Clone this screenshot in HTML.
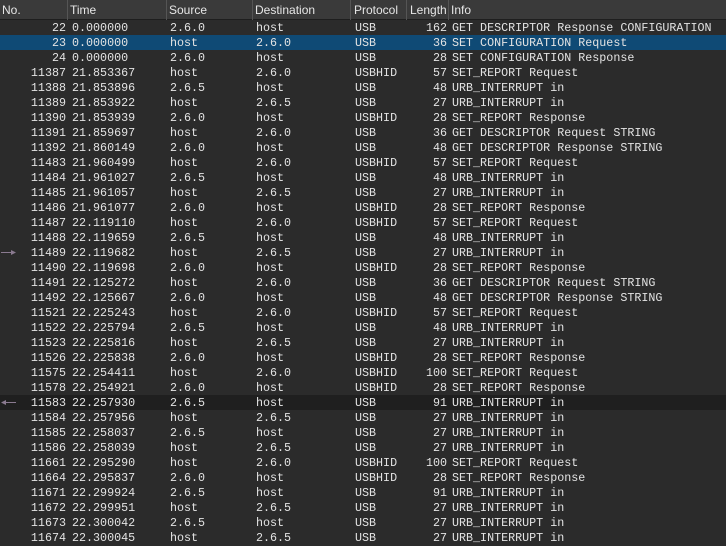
<!DOCTYPE html>
<html><head><meta charset="utf-8"><style>
*{margin:0;padding:0;box-sizing:border-box}
body{width:726px;height:545px;overflow:hidden;background:#2b2b2b;color:#e3e3e3;font-family:"Liberation Mono",monospace;font-size:11.7px}
.hd{position:absolute;left:0;top:0;width:726px;height:20px;background:#3a3a3a;border-bottom:1px solid #1e1e1e;font-family:"Liberation Sans",sans-serif;font-size:12px;color:#e6e6e6}
.hd span{position:absolute;top:3px}
.hd i{position:absolute;top:0;width:1px;height:20px;background:#555}
.r{position:absolute;left:0;width:726px;height:15px;line-height:15px;white-space:pre}
.r span{position:absolute;top:1px}
.n{right:660px;text-align:right}
.t{left:72px}.s{left:170px}.d{left:256px}.p{left:355px}
.l{right:279px;text-align:right}.f{left:452px}
.sel{background:#0f4a75}
.dk{background:#1f1f1f}
.ar{position:absolute;top:7px;height:1px;background:#8a7a90}
</style></head><body>
<div class="hd">
<span style="left:2px">No.</span><i style="left:67px"></i>
<span style="left:70px">Time</span><i style="left:166px"></i>
<span style="left:169px">Source</span><i style="left:252px"></i>
<span style="left:255px">Destination</span><i style="left:350px"></i>
<span style="left:354px">Protocol</span><i style="left:406px"></i>
<span style="left:410px">Length</span><i style="left:448px"></i>
<span style="left:451px">Info</span>
</div>
<div class="r" style="top:20px"><span class="n">22</span><span class="t">0.000000</span><span class="s">2.6.0</span><span class="d">host</span><span class="p">USB</span><span class="l">162</span><span class="f">GET DESCRIPTOR Response CONFIGURATION</span></div>
<div class="r sel" style="top:35px"><span class="n">23</span><span class="t">0.000000</span><span class="s">host</span><span class="d">2.6.0</span><span class="p">USB</span><span class="l">36</span><span class="f">SET CONFIGURATION Request</span></div>
<div class="r" style="top:50px"><span class="n">24</span><span class="t">0.000000</span><span class="s">2.6.0</span><span class="d">host</span><span class="p">USB</span><span class="l">28</span><span class="f">SET CONFIGURATION Response</span></div>
<div class="r" style="top:65px"><span class="n">11387</span><span class="t">21.853367</span><span class="s">host</span><span class="d">2.6.0</span><span class="p">USBHID</span><span class="l">57</span><span class="f">SET_REPORT Request</span></div>
<div class="r" style="top:80px"><span class="n">11388</span><span class="t">21.853896</span><span class="s">2.6.5</span><span class="d">host</span><span class="p">USB</span><span class="l">48</span><span class="f">URB_INTERRUPT in</span></div>
<div class="r" style="top:95px"><span class="n">11389</span><span class="t">21.853922</span><span class="s">host</span><span class="d">2.6.5</span><span class="p">USB</span><span class="l">27</span><span class="f">URB_INTERRUPT in</span></div>
<div class="r" style="top:110px"><span class="n">11390</span><span class="t">21.853939</span><span class="s">2.6.0</span><span class="d">host</span><span class="p">USBHID</span><span class="l">28</span><span class="f">SET_REPORT Response</span></div>
<div class="r" style="top:125px"><span class="n">11391</span><span class="t">21.859697</span><span class="s">host</span><span class="d">2.6.0</span><span class="p">USB</span><span class="l">36</span><span class="f">GET DESCRIPTOR Request STRING</span></div>
<div class="r" style="top:140px"><span class="n">11392</span><span class="t">21.860149</span><span class="s">2.6.0</span><span class="d">host</span><span class="p">USB</span><span class="l">48</span><span class="f">GET DESCRIPTOR Response STRING</span></div>
<div class="r" style="top:155px"><span class="n">11483</span><span class="t">21.960499</span><span class="s">host</span><span class="d">2.6.0</span><span class="p">USBHID</span><span class="l">57</span><span class="f">SET_REPORT Request</span></div>
<div class="r" style="top:170px"><span class="n">11484</span><span class="t">21.961027</span><span class="s">2.6.5</span><span class="d">host</span><span class="p">USB</span><span class="l">48</span><span class="f">URB_INTERRUPT in</span></div>
<div class="r" style="top:185px"><span class="n">11485</span><span class="t">21.961057</span><span class="s">host</span><span class="d">2.6.5</span><span class="p">USB</span><span class="l">27</span><span class="f">URB_INTERRUPT in</span></div>
<div class="r" style="top:200px"><span class="n">11486</span><span class="t">21.961077</span><span class="s">2.6.0</span><span class="d">host</span><span class="p">USBHID</span><span class="l">28</span><span class="f">SET_REPORT Response</span></div>
<div class="r" style="top:215px"><span class="n">11487</span><span class="t">22.119110</span><span class="s">host</span><span class="d">2.6.0</span><span class="p">USBHID</span><span class="l">57</span><span class="f">SET_REPORT Request</span></div>
<div class="r" style="top:230px"><span class="n">11488</span><span class="t">22.119659</span><span class="s">2.6.5</span><span class="d">host</span><span class="p">USB</span><span class="l">48</span><span class="f">URB_INTERRUPT in</span></div>
<div class="r" style="top:245px"><div class="ar" style="left:1px;width:13px"></div><svg style="position:absolute;left:11px;top:4px" width="6" height="7"><path d="M0 1L5 3.5L0 6Z" fill="#8a7a90"/></svg><span class="n">11489</span><span class="t">22.119682</span><span class="s">host</span><span class="d">2.6.5</span><span class="p">USB</span><span class="l">27</span><span class="f">URB_INTERRUPT in</span></div>
<div class="r" style="top:260px"><span class="n">11490</span><span class="t">22.119698</span><span class="s">2.6.0</span><span class="d">host</span><span class="p">USBHID</span><span class="l">28</span><span class="f">SET_REPORT Response</span></div>
<div class="r" style="top:275px"><span class="n">11491</span><span class="t">22.125272</span><span class="s">host</span><span class="d">2.6.0</span><span class="p">USB</span><span class="l">36</span><span class="f">GET DESCRIPTOR Request STRING</span></div>
<div class="r" style="top:290px"><span class="n">11492</span><span class="t">22.125667</span><span class="s">2.6.0</span><span class="d">host</span><span class="p">USB</span><span class="l">48</span><span class="f">GET DESCRIPTOR Response STRING</span></div>
<div class="r" style="top:305px"><span class="n">11521</span><span class="t">22.225243</span><span class="s">host</span><span class="d">2.6.0</span><span class="p">USBHID</span><span class="l">57</span><span class="f">SET_REPORT Request</span></div>
<div class="r" style="top:320px"><span class="n">11522</span><span class="t">22.225794</span><span class="s">2.6.5</span><span class="d">host</span><span class="p">USB</span><span class="l">48</span><span class="f">URB_INTERRUPT in</span></div>
<div class="r" style="top:335px"><span class="n">11523</span><span class="t">22.225816</span><span class="s">host</span><span class="d">2.6.5</span><span class="p">USB</span><span class="l">27</span><span class="f">URB_INTERRUPT in</span></div>
<div class="r" style="top:350px"><span class="n">11526</span><span class="t">22.225838</span><span class="s">2.6.0</span><span class="d">host</span><span class="p">USBHID</span><span class="l">28</span><span class="f">SET_REPORT Response</span></div>
<div class="r" style="top:365px"><span class="n">11575</span><span class="t">22.254411</span><span class="s">host</span><span class="d">2.6.0</span><span class="p">USBHID</span><span class="l">100</span><span class="f">SET_REPORT Request</span></div>
<div class="r" style="top:380px"><span class="n">11578</span><span class="t">22.254921</span><span class="s">2.6.0</span><span class="d">host</span><span class="p">USBHID</span><span class="l">28</span><span class="f">SET_REPORT Response</span></div>
<div class="r dk" style="top:395px"><div class="ar" style="left:3px;width:13px"></div><svg style="position:absolute;left:0px;top:4px" width="6" height="7"><path d="M6 1L1 3.5L6 6Z" fill="#8a7a90"/></svg><span class="n">11583</span><span class="t">22.257930</span><span class="s">2.6.5</span><span class="d">host</span><span class="p">USB</span><span class="l">91</span><span class="f">URB_INTERRUPT in</span></div>
<div class="r" style="top:410px"><span class="n">11584</span><span class="t">22.257956</span><span class="s">host</span><span class="d">2.6.5</span><span class="p">USB</span><span class="l">27</span><span class="f">URB_INTERRUPT in</span></div>
<div class="r" style="top:425px"><span class="n">11585</span><span class="t">22.258037</span><span class="s">2.6.5</span><span class="d">host</span><span class="p">USB</span><span class="l">27</span><span class="f">URB_INTERRUPT in</span></div>
<div class="r" style="top:440px"><span class="n">11586</span><span class="t">22.258039</span><span class="s">host</span><span class="d">2.6.5</span><span class="p">USB</span><span class="l">27</span><span class="f">URB_INTERRUPT in</span></div>
<div class="r" style="top:455px"><span class="n">11661</span><span class="t">22.295290</span><span class="s">host</span><span class="d">2.6.0</span><span class="p">USBHID</span><span class="l">100</span><span class="f">SET_REPORT Request</span></div>
<div class="r" style="top:470px"><span class="n">11664</span><span class="t">22.295837</span><span class="s">2.6.0</span><span class="d">host</span><span class="p">USBHID</span><span class="l">28</span><span class="f">SET_REPORT Response</span></div>
<div class="r" style="top:485px"><span class="n">11671</span><span class="t">22.299924</span><span class="s">2.6.5</span><span class="d">host</span><span class="p">USB</span><span class="l">91</span><span class="f">URB_INTERRUPT in</span></div>
<div class="r" style="top:500px"><span class="n">11672</span><span class="t">22.299951</span><span class="s">host</span><span class="d">2.6.5</span><span class="p">USB</span><span class="l">27</span><span class="f">URB_INTERRUPT in</span></div>
<div class="r" style="top:515px"><span class="n">11673</span><span class="t">22.300042</span><span class="s">2.6.5</span><span class="d">host</span><span class="p">USB</span><span class="l">27</span><span class="f">URB_INTERRUPT in</span></div>
<div class="r" style="top:530px"><span class="n">11674</span><span class="t">22.300045</span><span class="s">host</span><span class="d">2.6.5</span><span class="p">USB</span><span class="l">27</span><span class="f">URB_INTERRUPT in</span></div>
</body></html>
